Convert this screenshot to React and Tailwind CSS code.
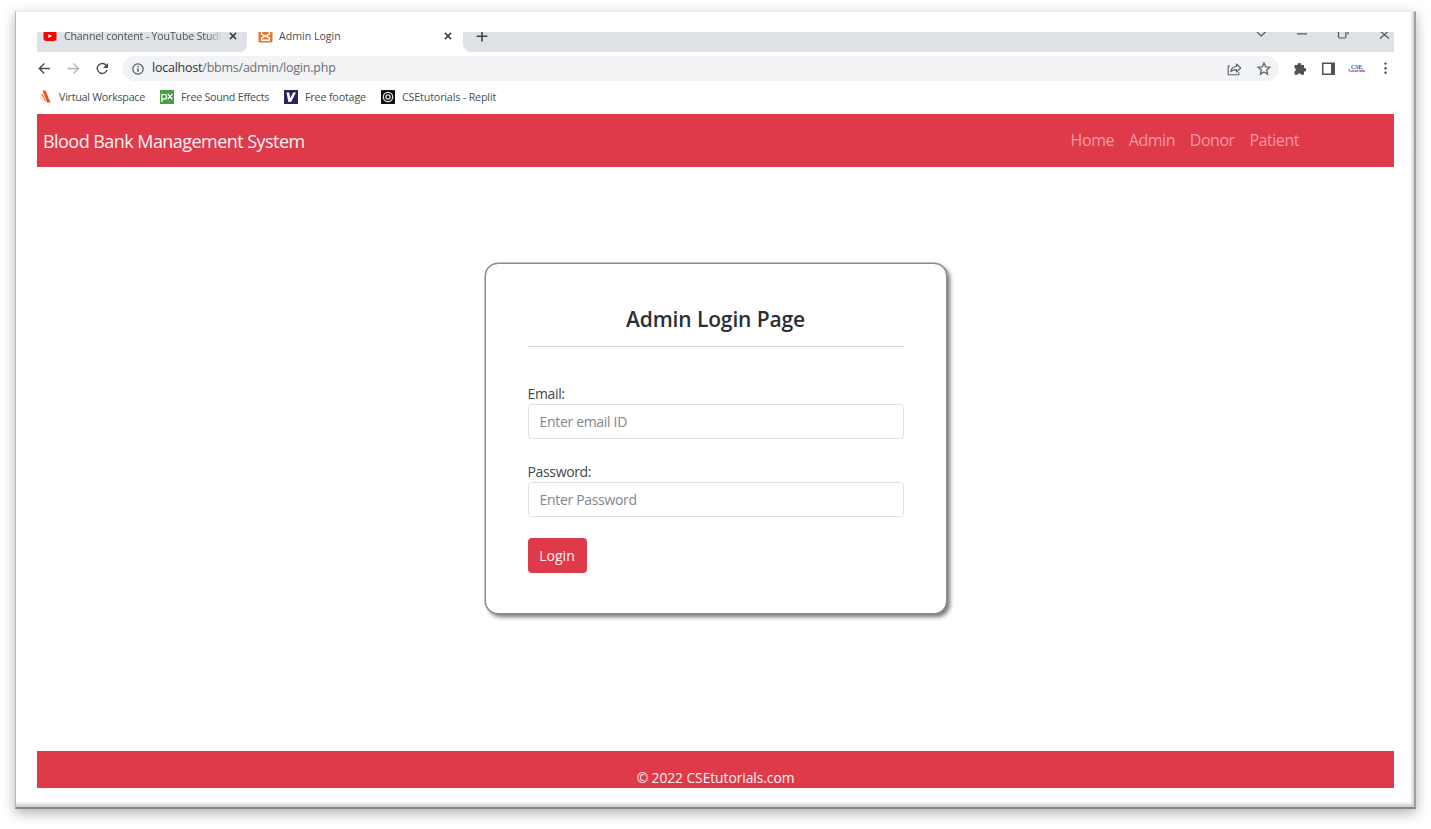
import React from "react";

function YouTubeIcon() {
  return (
    <svg className="h-[14px] w-[14px] shrink-0" viewBox="0 0 14 14">
      <rect x="0.5" y="1" width="13" height="10" rx="2.4" fill="#f00" />
      <path d="M5.4 3.9v4.2L9.2 6z" fill="#fff" />
    </svg>
  );
}

function XamppIcon() {
  return (
    <svg className="h-[15px] w-[15px] shrink-0" viewBox="0 0 15 15">
      <rect x="0.5" y="0.5" width="14" height="14" rx="1.5" fill="#e8762c" />
      <path
        d="M3.600 4v2.200L7.500 8.300l3.900-2.100V4M3.600 12.200V9.900L7.500 8l3.900 1.900v2.300z"
        fill="none"
        stroke="#fff"
        strokeWidth="1.400"
        strokeLinejoin="round"
      />
    </svg>
  );
}

function CloseIcon() {
  return (
    <svg className="h-[8px] w-[8px] shrink-0" viewBox="0 0 8 8" fill="none" stroke="#3c4043" strokeWidth="1.5">
      <path d="M0.9 0.9l6.2 6.2M7.1 0.9L0.9 7.1" />
    </svg>
  );
}

function TabStrip() {
  return (
    <div className="flex h-[20px] shrink-0 items-stretch overflow-hidden bg-white text-[10.600px] text-[#4a4d51]">
      <div className="flex w-[209.500px] items-start overflow-hidden rounded-br-[7px] bg-[#dee1e6] pl-[6px]">
        <div className="-mt-[2px]"><YouTubeIcon /></div>
        <span className="-mt-[3px] ml-[7px] w-[158px] overflow-hidden whitespace-nowrap bg-gradient-to-r from-[#4a4d51] from-90% to-[#dee1e6] bg-clip-text leading-[15px] tracking-[-0.150px] text-transparent">
          Channel content - YouTube Studio
        </span>
        <div className="ml-[7px]"><CloseIcon /></div>
      </div>
      <div className="flex flex-1 items-start pl-[11px]">
        <div className="-mt-[4px]"><XamppIcon /></div>
        <span className="-mt-[3px] ml-[6.500px] w-[165px] whitespace-nowrap leading-[15px]">Admin Login</span>
        <CloseIcon />
      </div>
      <div className="flex w-[931px] items-start rounded-bl-[8px] bg-[#dee1e6]">
        <svg className="ml-[13px] h-[11px] w-[12px]" viewBox="0 0 12 11" stroke="#3c4043" strokeWidth="1.600">
          <path d="M6 -1v10.500M0.600 4.200h10.800" />
        </svg>
        <svg className="ml-auto h-[12px] w-[138px]" viewBox="0 0 138 12" fill="none" stroke="#55585c" strokeWidth="1.200">
          <path d="M1 0l4.200 4L9.400 0M41 1.900h10M82.500 0v4.800q0 1.200 1.200 1.200h5q1.200 0 1.200-1.200V0M92 2.500V0M124 6.500l8.600-7.500M124 -1l9 7.500" />
        </svg>
      </div>
    </div>
  );
}

function Toolbar() {
  return (
    <div className="mt-[4px] flex h-[25px] shrink-0 items-center">
      <svg className="h-[14px] w-[74px] shrink-0" viewBox="0 0 74 14" fill="none" strokeWidth="1.400">
        <path d="M13 6.500H2.500M7.300 1.500L2.300 6.500l5 5" stroke="#4a4d51" />
        <path d="M30.500 6.500H41M36.500 1.500l5 5-5 5" stroke="#b0b3b7" />
        <path d="M69.500 3.800A5 5 0 1 0 70 8" stroke="#4a4d51" />
        <path d="M71 1v5h-5z" fill="#4a4d51" />
      </svg>
      <div className="ml-[11px] flex h-[25px] w-[1157px] shrink-0 items-center rounded-full bg-[#f1f3f4] pl-[10px]">
        <svg className="h-[12px] w-[12px]" viewBox="0 0 12 12" fill="none" stroke="#55585c" strokeWidth="1.200">
          <circle cx="6" cy="6" r="5.200" />
          <path d="M6 5.300v3.500M6 2.900v1.300" strokeWidth="1.400" />
        </svg>
        <span className="ml-[8px] text-[12.500px] tracking-[-0.230px] text-[#6b6f74]">
          <span className="text-[#303236]">localhost</span>/bbms/admin/login.php
        </span>
        <svg className="ml-auto mr-[8px] h-[14px] w-[44px]" viewBox="0 0 44 14" fill="none" stroke="#5f6368" strokeWidth="1.100">
          <path d="M3 4H1.200v8.700h10.600v-2.500" />
          <path d="M3.800 9.700c.4-3.400 2.300-5 5.600-5.200V2l4.300 4-4.300 4V7.600C7 7.500 5.200 8.100 3.800 9.700z" strokeLinejoin="round" />
          <path d="M37 .9l1.700 3.900 4.200.4-3.200 2.800.9 4.100-3.600-2.200-3.600 2.200.9-4.100-3.200-2.800 4.200-.4z" strokeWidth="1.300" />
        </svg>
      </div>
      <svg className="ml-[13.500px] h-[14px] w-[43px] shrink-0" viewBox="0 0 43 14" fill="#4f5358">
        <path d="M1.500 3.100h3.100a1.800 1.800 0 1 1 3.500 0H11v2.900a1.800 1.800 0 1 1 0 3.500v3.300H8.100a1.800 1.800 0 0 0-3.500 0H1.500V9.400a1.700 1.700 0 0 0 0-3.300z" />
        <path d="M29 .5h13v12.500h-13zM30.500 2v9.500h7.500v-9.500z" fillRule="evenodd" />
      </svg>
      <div className="ml-[12px] flex w-[18px] shrink-0 flex-col items-center whitespace-nowrap font-bold">
        <span className="font-['Liberation_Serif',serif] text-[6.500px] leading-[5px] tracking-[-0.400px] text-[#1f5fc4]">CSE</span>
        <span className="text-[4px] leading-[3.500px] tracking-[-0.100px] text-[#cf2f3d]">Tutorials</span>
      </div>
      <svg className="ml-[17px] h-[13px] w-[5px] shrink-0" viewBox="0 0 5 13" fill="#4a4d51">
        <circle cx="2.500" cy="1.600" r="1.200" />
        <circle cx="2.500" cy="6.200" r="1.200" />
        <circle cx="2.500" cy="10.800" r="1.200" />
      </svg>
    </div>
  );
}

function Bookmarks() {
  return (
    <div className="flex h-[32.500px] shrink-0 items-center whitespace-nowrap text-[10.800px] tracking-[-0.300px] text-[#4a4d51]">
      <svg className="ml-[2px] h-[14px] w-[12px]" viewBox="0 0 12 14">
        <path d="M3.500 .5h3L11.500 12.500H8z" fill="#e8532f" />
        <path d="M1.800 4h2L7.500 12l-1.600-1z" fill="#f28b50" />
        <path d="M0.500 7h1.300L4 11z" fill="#f6b56c" />
      </svg>
      <span className="ml-[8px] w-[101px]">Virtual Workspace</span>
      <svg className="h-[14px] w-[14px]" viewBox="0 0 14 14">
        <rect width="14" height="14" fill="#4a9f49" />
        <path d="M1.900 12V4.500h2.300a2.100 2.100 0 0 1 0 4.700H2M7.600 3.900l4.800 5.500M12.500 3.900L7.600 9.400" fill="none" stroke="#fff" strokeWidth="1.200" />
      </svg>
      <span className="ml-[7px] w-[103px]">Free Sound Effects</span>
      <svg className="h-[14px] w-[14px]" viewBox="0 0 14 14">
        <rect width="14" height="14" fill="#2c235e" />
        <path d="M2.500 2.500h2.700l1 5.800 2.900-5.800h2.900L7 12H4.400z" fill="#fff" />
      </svg>
      <span className="ml-[7px] w-[76px] tracking-[-0.200px]">Free footage</span>
      <svg className="h-[14px] w-[14px]" viewBox="0 0 14 14">
        <rect width="14" height="14" rx="0.500" fill="#111" />
        <g fill="none" stroke="#ddd">
          <circle cx="7" cy="7" r="4.700" strokeWidth="1.300" />
          <circle cx="7" cy="7" r="2.100" strokeWidth="1.300" />
        </g>
      </svg>
      <span className="ml-[7px] tracking-[-0.200px]">CSEtutorials - Replit</span>
    </div>
  );
}

function Field({ label, placeholder, type }) {
  return (
    <label className="block text-[14px] leading-[20px] tracking-[-0.350px] text-[#43474b]">
      {label}
      <input
        type={type}
        placeholder={placeholder}
        className="block h-[35px] w-full rounded-[4px] border border-[#dfe2e5] bg-white px-[11px] text-[14px] tracking-[-0.320px] outline-none placeholder:text-[#80868c]"
      />
    </label>
  );
}

function LoginCard() {
  return (
    <form className="mt-[96px] h-[351px] w-[462px] rounded-[13px] border border-[#8b8b8b] bg-white px-[42px] pt-[40px] shadow-[0_0_0_0.500px_#8b8b8b,3px_3px_4px_#777]">
      <h1 className="flex h-[43px] items-center justify-center border-b border-[#d2d3d4] pb-[11px] text-[21px] font-semibold tracking-[-0.120px] text-[#2b3035]">
        Admin Login Page
      </h1>
      <div className="mt-[37px] flex flex-col gap-[23px]">
        <Field label="Email:" placeholder="Enter email ID" type="email" />
        <Field label="Password:" placeholder="Enter Password" type="password" />
      </div>
      <button type="button" className="mt-[20.500px] h-[35px] w-[59px] rounded-[4px] bg-[#df3a4a] text-[14px] text-[#fff1f2]">
        Login
      </button>
    </form>
  );
}

export default function App() {
  return (
    <div className="h-[829px] w-[1431px] overflow-hidden bg-white pl-[15px] pt-[11px] font-['Open_Sans','Noto_Sans',sans-serif]">
      <div className="flex h-[798px] w-[1401px] flex-col border-b-2 border-l border-r-2 border-t border-b-[#858585] border-l-[#b5b5b5] border-r-[#a0a0a0] border-t-[#ececec] px-[21px] pt-[20px] shadow-[0_4px_12px_#00000050,inset_-2px_-3px_3px_#00000030]">
        <div className="flex h-[756px] w-[1357px] flex-col">
          <TabStrip />
          <Toolbar />
          <Bookmarks />
          <nav className="flex h-[53.500px] shrink-0 items-center bg-[#df3a4a] pl-[6px] pr-[95px]">
            <span className="whitespace-nowrap pt-[2px] text-[18px] tracking-[-0.550px] text-[#fff1f2]">Blood Bank Management System</span>
            <div className="ml-auto flex gap-[14.700px] whitespace-nowrap text-[16px] tracking-[-0.450px] text-[#f49aa3]">
              <a>Home</a>
              <a>Admin</a>
              <a>Donor</a>
              <a>Patient</a>
            </div>
          </nav>
          <main className="flex flex-1 flex-col items-center">
            <LoginCard />
          </main>
          <footer className="flex h-[37px] shrink-0 items-start justify-center overflow-hidden bg-[#df3a4a] pt-[17px] text-[13.800px] leading-[20px] tracking-[-0.050px] text-[#fff1f2]">
            © 2022 CSEtutorials.com
          </footer>
        </div>
      </div>
    </div>
  );
}
